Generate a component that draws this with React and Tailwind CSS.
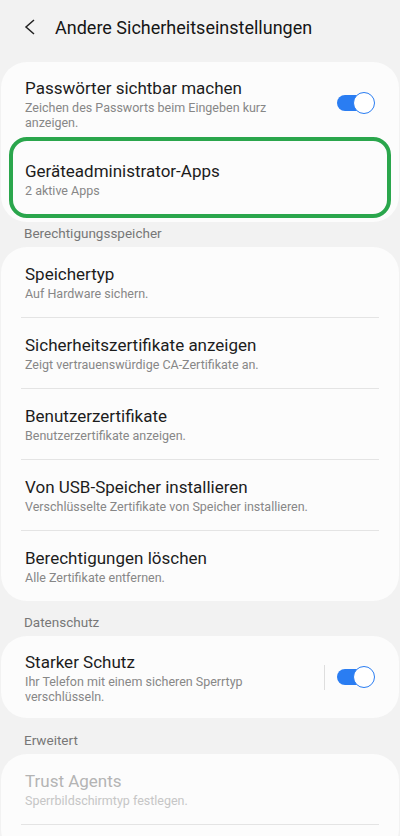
import React from "react";

const font = { fontFamily: "Roboto, 'Noto Sans', Arial, sans-serif" };

function Toggle() {
  return (
    <div className="relative w-[38px] h-[22px] shrink-0 flex items-center">
      <div className="w-[34px] h-[16px] rounded-full bg-[#2a7df2]" />
      <div className="absolute right-0 top-0 w-[22px] h-[22px] rounded-full bg-white border-[1.5px] border-[#2a7df2]" />
    </div>
  );
}

function Row({ title, sub, disabled, last, pt = "pt-[15px]" }) {
  return (
    <div>
      <div className={`${pt} pb-[16px] px-[24px]`}>
        <div className={`text-[17px] leading-[24px] ${disabled ? "text-[#b4b4b4]" : "text-[#1c1c1c]"}`}>{title}</div>
        <div className={`text-[12.5px] leading-[15px] ${disabled ? "text-[#c6c6c6]" : "text-[#878787]"}`}>{sub}</div>
      </div>
      {!last && <div className="mx-[20px] h-px bg-[#e4e4e4]" />}
    </div>
  );
}

function Header({ children, cls = "pt-[14px] pb-[6px]" }) {
  return (
    <div className={`${cls} px-[24px] text-[13.5px] leading-[16px] text-[#777777]`}>{children}</div>
  );
}

export default function App() {
  return (
    <div className="w-[400px] h-[836px] overflow-hidden bg-[#f2f2f2]" style={font}>
      {/* top bar */}
      <div className="h-[54px] flex items-center pl-[24px]">
        <svg width="12" height="16" viewBox="0 0 12 16" className="shrink-0">
          <polyline points="10,1 2,8 10,15" fill="none" stroke="#222" strokeWidth="1.5" strokeLinejoin="miter" />
        </svg>
        <div className="ml-[19px] text-[18px] text-[#161616]">Andere Sicherheitseinstellungen</div>
      </div>

      <div className="mx-[1px] mt-[8px] bg-[#fcfcfc] rounded-[26px] pb-[4px]">
        <div className="flex items-center pt-[14px] pb-[7px] pl-[24px] pr-[24px]">
          <div className="flex-1 pr-[36px]">
            <div className="text-[17px] leading-[24px] text-[#1c1c1c]">Passwörter sichtbar machen</div>
            <div className="text-[12.5px] leading-[15px] text-[#878787]">
              Zeichen des Passworts beim Eingeben kurz anzeigen.
            </div>
          </div>
          <Toggle />
        </div>
        <div className="mx-[8px] border-[4px] border-[#2aa64c] rounded-[18px] pt-[18px] pb-[16px] px-[12px]">
          <div className="text-[17px] leading-[24px] text-[#1c1c1c]">Geräteadministrator-Apps</div>
          <div className="text-[12.5px] leading-[15px] text-[#878787]">2 aktive Apps</div>
        </div>
      </div>

      <Header cls="pt-[3px] pb-[6px]">Berechtigungsspeicher</Header>

      <div className="mx-[1px] bg-[#fcfcfc] rounded-[26px]">
        <Row title="Speichertyp" sub="Auf Hardware sichern." />
        <Row title="Sicherheitszertifikate anzeigen" sub="Zeigt vertrauenswürdige CA-Zertifikate an." />
        <Row title="Benutzerzertifikate" sub="Benutzerzertifikate anzeigen." />
        <Row title="Von USB-Speicher installieren" sub="Verschlüsselte Zertifikate von Speicher installieren." />
        <Row title="Berechtigungen löschen" sub="Alle Zertifikate entfernen." last />
      </div>

      <Header cls="pt-[13px] pb-[6px]">Datenschutz</Header>

      <div className="mx-[1px] bg-[#fcfcfc] rounded-[26px]">
        <div className="flex items-center pt-[14px] pb-[14px] pl-[24px] pr-[24px]">
          <div className="flex-1 pr-[20px]">
            <div className="text-[17px] leading-[24px] text-[#1c1c1c]">Starker Schutz</div>
            <div className="text-[12.5px] leading-[15px] text-[#878787]">
              Ihr Telefon mit einem sicheren Sperrtyp verschlüsseln.
            </div>
          </div>
          <div className="w-px h-[25px] bg-[#dedede] mr-[12px]" />
          <Toggle />
        </div>
      </div>

      <Header>Erweitert</Header>

      <div className="mx-[1px] bg-[#fcfcfc] rounded-[26px] pb-[30px]">
        <Row title="Trust Agents" sub="Sperrbildschirmtyp festlegen." disabled />
      </div>
    </div>
  );
}
